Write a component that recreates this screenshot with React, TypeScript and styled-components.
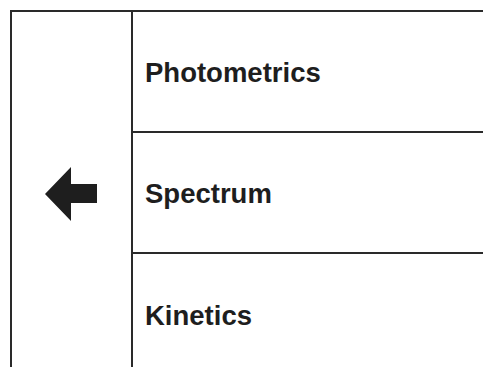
import * as React from 'react';
import styled, { createGlobalStyle } from 'styled-components';

const GlobalStyle = createGlobalStyle`
    html, body {
        margin: 0;
        padding: 0;
        background: #ffffff;
        overflow: hidden;
    }
`;

const Page = styled.div`
    width: 483px;
    height: 367px;
    padding: 10px 0 0 10px;
    box-sizing: border-box;
    overflow: hidden;
`;

const Frame = styled.div`
    display: flex;
    width: 700px;
    border-top: 2px solid #2a2a2a;
    border-left: 2px solid #2a2a2a;
`;

const Side = styled.div`
    width: 119px;
    flex: none;
    display: flex;
    align-items: center;
    justify-content: center;
    border-right: 2px solid #2a2a2a;
`;

const Menu = styled.div`
    flex: 1;
    display: flex;
    flex-direction: column;
`;

const Item = styled.div<{ $last?: boolean }>`
    height: 121px;
    display: flex;
    align-items: center;
    padding-left: 12px;
    padding-top: 3px;
    box-sizing: border-box;
    border-bottom: ${(p) => (p.$last ? 'none' : '2px solid #2a2a2a')};
    font-family: 'Liberation Sans', Arial, sans-serif;
    font-weight: bold;
    font-size: 27.5px;
    color: #1e1e1e;
`;

const items = ['Photometrics', 'Spectrum', 'Kinetics'];

const BackArrow = () => (
    <svg width="53" height="54" viewBox="0 0 53 54">
        <polygon points="0,27 26,0 26,17 52,17 52,36 26,36 26,54" fill="#1e1e1e" />
    </svg>
);

export default function App() {
    return (
        <>
            <GlobalStyle />
            <Page>
                <Frame>
                    <Side>
                        <BackArrow />
                    </Side>
                    <Menu>
                        {items.map((label, i) => (
                            <Item key={label} $last={i === items.length - 1}>
                                {label}
                            </Item>
                        ))}
                    </Menu>
                </Frame>
            </Page>
        </>
    );
}
